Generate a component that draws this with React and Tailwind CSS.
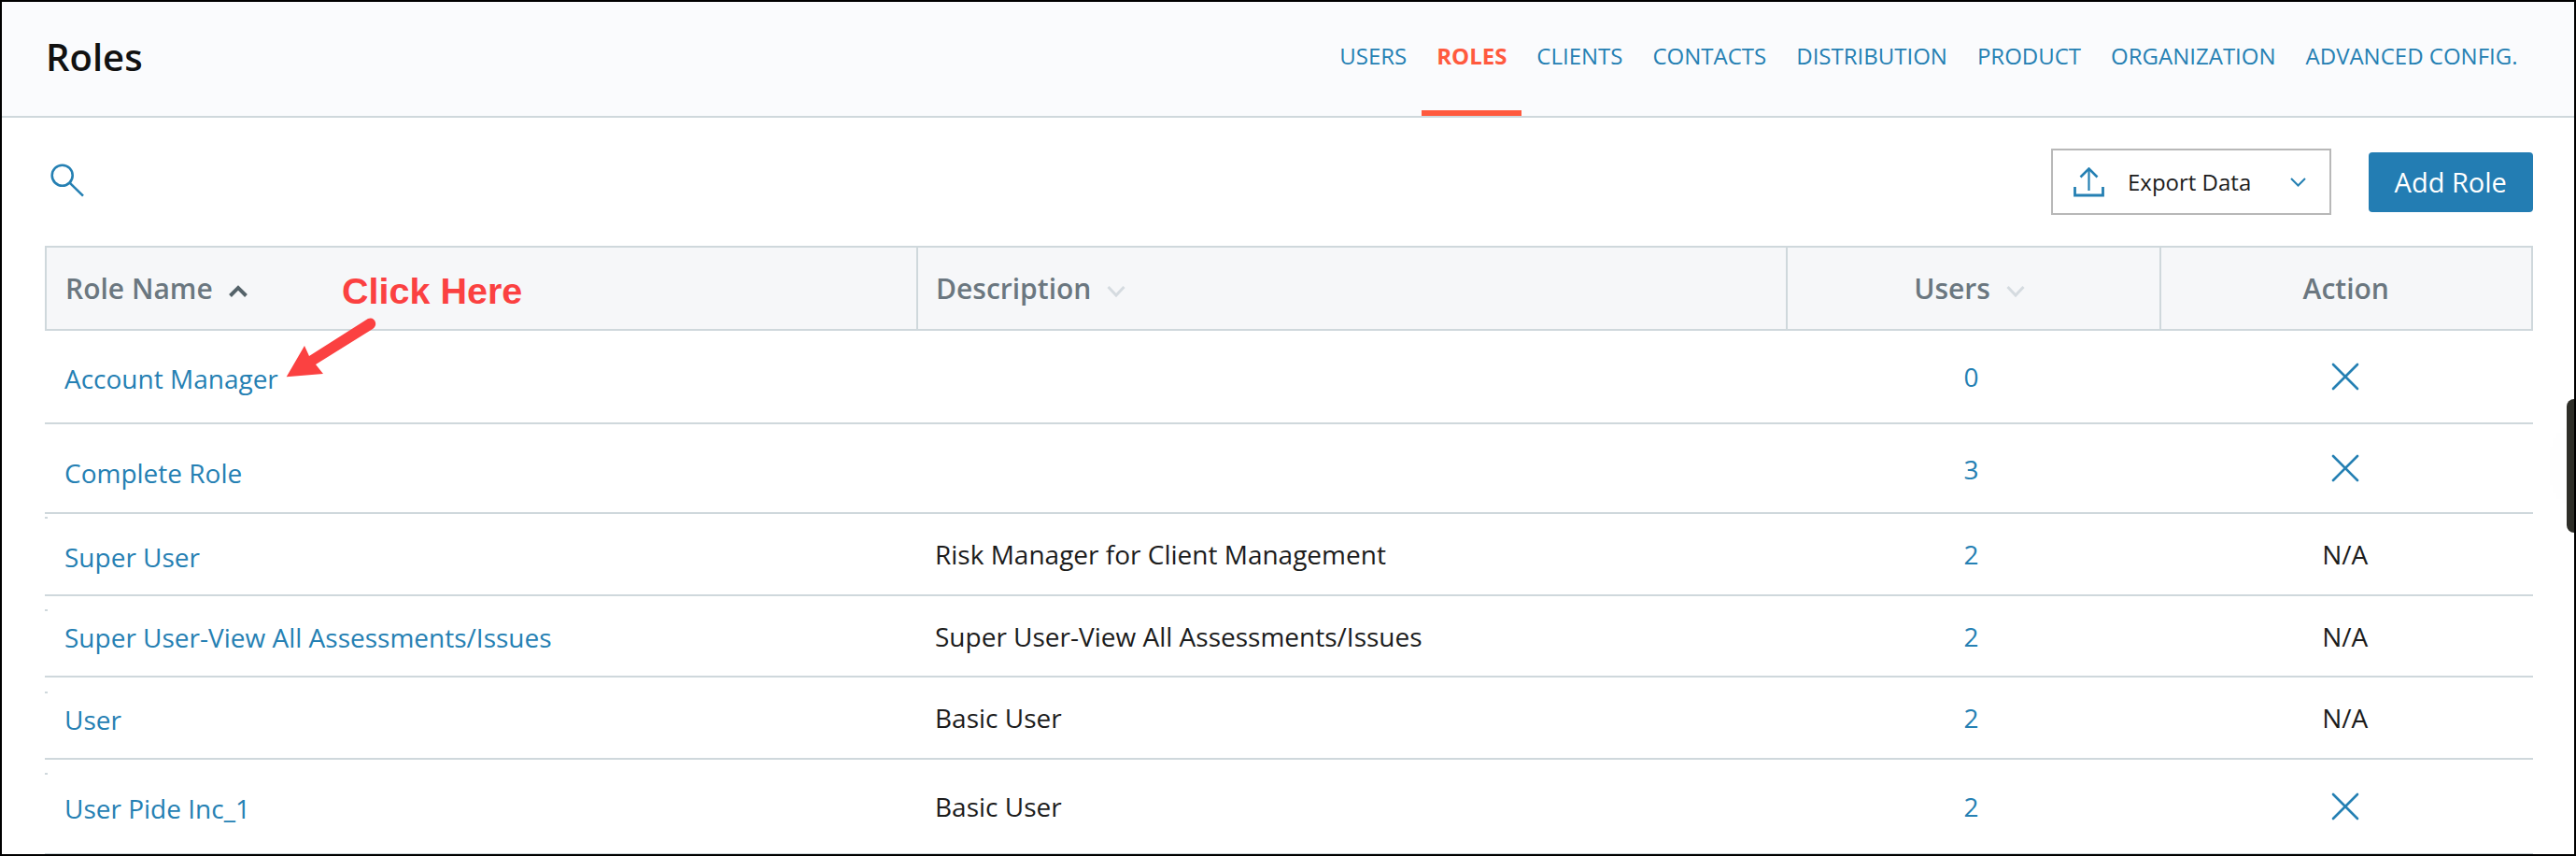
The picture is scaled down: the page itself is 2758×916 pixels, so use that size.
import React from "react";
import { X } from "lucide-react";

const tabs = ["USERS", "ROLES", "CLIENTS", "CONTACTS", "DISTRIBUTION", "PRODUCT", "ORGANIZATION", "ADVANCED CONFIG."];

const roles = [
  { name: "Account Manager", desc: "", users: "0", action: "x", rowClass: "h-[100px]", nameClass: "pt-[3px]" },
  { name: "Complete Role", desc: "", users: "3", action: "x", rowClass: "h-[96px]", nameClass: "pt-[9px]", usersClass: "pt-[2px]" },
  { name: "Super User", desc: "Risk Manager for Client Management", users: "2", action: "N/A", rowClass: "h-[88px]", nameClass: "pt-[5px]", dot: "top-[3px]" },
  { name: "Super User-View All Assessments/Issues", desc: "Super User-View All Assessments/Issues", users: "2", action: "N/A", rowClass: "h-[87px]", nameClass: "pt-[3px]", dot: "top-[14px]" },
  { name: "User", desc: "Basic User", users: "2", action: "N/A", rowClass: "h-[88px]", nameClass: "pt-[3px]", dot: "top-[15px]" },
  { name: "User Pide Inc_1", desc: "Basic User", users: "2", action: "x", rowClass: "h-[102px] border-b-0", nameClass: "pt-[3px]", dot: "top-[14px]" },
];

function SortIcon({ up }) {
  return (
    <svg width="20" height="13" viewBox="0 0 20 13" fill="none" className="shrink-0 mt-[6px]">
      {up ? (
        <path d="M1.5 11.5 L10 3 L18.5 11.5" stroke="#55636a" strokeWidth="4" />
      ) : (
        <path d="M1.5 2 L10 11 L18.5 2" stroke="#d5dbe0" strokeWidth="3" />
      )}
    </svg>
  );
}

export default function App() {
  return (
    <div className="relative w-[2758px] h-[916px] overflow-hidden border-2 border-black bg-white text-[#1c1c1c] font-['Open_Sans',sans-serif]">
      {/* Top bar */}
      <div className="flex justify-between h-[124px] pl-[47px] pr-[44.5px] bg-[#fafbfd] border-b-2 border-[#cfd8dc]">
        <h1 className="self-center pb-[4px] text-[40px] font-[550] text-[#111]">Roles</h1>
        <nav className="flex">
          {tabs.map((tab) => (
            <a
              key={tab}
              className={
                tab === "ROLES"
                  ? "flex items-center px-[16px] text-[24px] font-bold border-b-[6px] text-[#ff5a3e] border-[#ff5a3e]"
                  : "flex items-center px-[16px] text-[24px] border-b-[6px] text-[#2580b3] border-transparent"
              }
            >
              {tab}
            </a>
          ))}
        </nav>
      </div>

      {/* Toolbar */}
      <div className="flex items-center justify-between h-[137px] pl-[52px] pr-[44px]">
        <svg width="36" height="36" viewBox="0 0 36 36" fill="none" stroke="#2580b3" strokeWidth="2.6" className="mb-[3px]">
          <circle cx="12.7" cy="12.7" r="11" />
          <line x1="20.6" y1="20.6" x2="35" y2="34.6" />
        </svg>
        <div className="flex items-center gap-[39.5px]">
          <button className="flex items-center w-[300px] h-[71px] pl-[22px] pr-[25px] border-2 border-[#b8b8b8] bg-white">
            <svg width="33" height="32" viewBox="0 0 33 32" fill="none" stroke="#2580b3" className="shrink-0">
              <path d="M16.5 1 V25" strokeWidth="2.2" />
              <path d="M7.5 10.5 L16.5 1.5 L25.5 10.5" strokeWidth="2.6" />
              <path d="M1.5 21 V30 H31.5 V21" strokeWidth="2.8" />
            </svg>
            <span className="ml-[25px] text-[24px]">Export Data</span>
            <svg width="17" height="10" viewBox="0 0 17 10" fill="none" stroke="#2580b3" strokeWidth="2" className="ml-auto">
              <path d="M1 1 L8.5 8.5 L16 1" />
            </svg>
          </button>
          <button className="w-[176.5px] h-[64px] rounded-[4px] bg-[#237db3] text-white text-[29px] font-medium">
            Add Role
          </button>
        </div>
      </div>

      {/* Table */}
      <div className="ml-[46px] mr-[44px]">
        <div className="grid grid-cols-[931px_930.5px_400px_1fr] h-[91px] bg-[#f6f7f9] border-2 border-[#cfd8dc] text-[30px] font-[550] text-[#6b7780]">
          <div className="flex items-center gap-[17px] pl-[20px]">
            Role Name
            <SortIcon up />
          </div>
          <div className="flex items-center gap-[17px] pl-[19px] border-l-2 border-[#cfd8dc]">
            Description
            <SortIcon />
          </div>
          <div className="flex items-center justify-center gap-[17px] pr-[8px] border-l-2 border-[#cfd8dc]">
            Users
            <SortIcon />
          </div>
          <div className="flex items-center justify-center border-l-2 border-[#cfd8dc]">Action</div>
        </div>

        {roles.map((role) => (
          <div
            key={role.name}
            className={`relative grid grid-cols-[931px_930.5px_400px_1fr] items-center text-[28px] border-b-2 border-[#cfd8dc] ${role.rowClass}`}
          >
            {role.dot && <span className={`absolute left-0 w-[3px] h-[2px] bg-[#cfd8dc] ${role.dot}`} />}
            <a className={`pl-[21px] text-[#2580b3] ${role.nameClass}`}>{role.name}</a>
            <div className="pl-[22px]">{role.desc}</div>
            <div className={`pl-[2px] text-center text-[#2580b3] ${role.usersClass || ""}`}>{role.users}</div>
            <div className="flex justify-center">
              {role.action === "x" ? <X size={52} strokeWidth={2.6} color="#2580b3" absoluteStrokeWidth className="-my-[10px]" /> : role.action}
            </div>
          </div>
        ))}
      </div>

      {/* Annotation */}
      <span className="absolute left-[364px] top-[286px] text-[39.5px] leading-[46px] font-bold text-[#fb4141] font-['Liberation_Sans',sans-serif]">
        Click Here
      </span>
      <svg width="120" height="80" viewBox="0 0 120 80" className="absolute left-[292px] top-[332px]">
        <path
          d="M12.7 69.3 L32 36 L37 47 L100 7 Q106 5 108 11 Q109 15 105 18 L44 56 L52 66 Z"
          fill="#fb4141"
        />
      </svg>

      {/* Dark tab at the window edge */}
      <div className="absolute right-0 top-[425px] w-[8px] h-[143px] rounded-l-[22px] bg-[#2e2e28] shadow-[0_0_70px_rgba(0,0,0,0.05)]" />
    </div>
  );
}
